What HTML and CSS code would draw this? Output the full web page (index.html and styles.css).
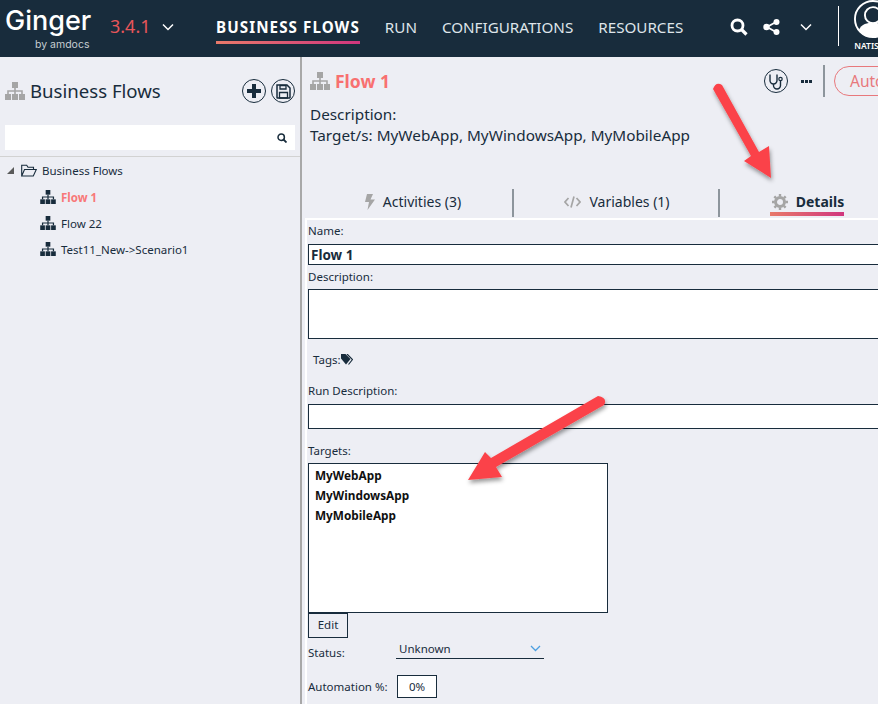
FILE: index.html
```html
<!DOCTYPE html>
<html lang="en">
<head>
    <meta charset="UTF-8">
    <title>Ginger - Business Flows</title>
    <link rel="stylesheet" href="styles.css">
</head>
<body>
    <svg class="defs" width="0" height="0">
        <symbol id="sitemap" viewBox="0 0 20 18">
            <rect x="7" y="0" width="6" height="6"/>
            <rect x="9.200" y="6" width="1.600" height="6"/>
            <path d="M2.200 12V8.200h15.600V12H16.200V9.800H3.800V12z"/>
            <rect x="0" y="12" width="6" height="6"/>
            <rect x="7" y="12" width="6" height="6"/>
            <rect x="14" y="12" width="6" height="6"/>
        </symbol>
    </svg>

    <header class="topbar">
        <div class="logo">
            <span class="logo-name">Ginger</span>
            <span class="logo-by">by amdocs</span>
        </div>
        <span class="version">3.4.1</span>
        <svg class="chevron" width="12" height="8" viewBox="0 0 12 8"><path d="M1 1.500l5 5 5-5" fill="none" stroke="#fff" stroke-width="1.500"/></svg>
        <nav class="nav">
            <a class="nav-item active">BUSINESS FLOWS</a>
            <a class="nav-item">RUN</a>
            <a class="nav-item">CONFIGURATIONS</a>
            <a class="nav-item">RESOURCES</a>
        </nav>
        <div class="top-tools">
            <svg width="18" height="18" viewBox="0 0 18 18"><circle cx="7.500" cy="7.500" r="5.500" fill="none" stroke="#fff" stroke-width="2.800"/><path d="M11.500 11.500l5 5" stroke="#fff" stroke-width="3.200"/></svg>
            <svg width="17" height="16" viewBox="0 0 17 16"><path d="M13 3L4 8l9 5" fill="none" stroke="#fff" stroke-width="1.800"/><circle cx="13.500" cy="3" r="3" fill="#fff"/><circle cx="3.500" cy="8" r="3.200" fill="#fff"/><circle cx="13.500" cy="13" r="3" fill="#fff"/></svg>
            <svg class="tool-chevron" width="12" height="8" viewBox="0 0 12 8"><path d="M1 1.500l5 5 5-5" fill="none" stroke="#fff" stroke-width="1.500"/></svg>
        </div>
        <div class="user">
            <svg class="avatar" width="38" height="38" viewBox="0 0 40 40"><circle cx="20" cy="20" r="19" fill="#182c3c" stroke="#fff" stroke-width="2"/><circle cx="20" cy="16" r="8.500" fill="none" stroke="#fff" stroke-width="2"/><path d="M5 32c3-7 9-8 15-8s12 1 15 8c-4 5-9 7-15 7S9 37 5 32z" fill="#fff"/></svg>
            <span class="user-name">NATISH</span>
        </div>
    </header>

    <main class="main">
        <aside class="side">
            <div class="side-head">
                <svg class="icon-grey side-icon"><use href="#sitemap"/></svg>
                <h2 class="side-title">Business Flows</h2>
                <button class="round-btn"><svg width="14" height="14" viewBox="0 0 14 14"><path d="M5 0h4v5h5v4H9v5H5V9H0V5h5z" fill="#182c3c"/></svg></button>
                <button class="round-btn"><svg width="15" height="15" viewBox="0 0 15 15"><path d="M1.500 1h9.500l3 3v9.500a.500.500 0 0 1-.500.500h-12a.500.500 0 0 1-.500-.500v-12.500z" fill="none" stroke="#182c3c" stroke-width="1.500"/><path d="M4 1.500h6v3.500H4zM3.500 8.500h8V14h-8z" fill="none" stroke="#182c3c" stroke-width="1.300"/></svg></button>
            </div>
            <div class="side-search">
                <svg width="10" height="10" viewBox="0 0 10 10"><circle cx="4.200" cy="4.200" r="3.200" fill="none" stroke="#182c3c" stroke-width="1.500"/><path d="M6.500 6.500l3 3" stroke="#182c3c" stroke-width="1.800"/></svg>
            </div>
            <ul class="tree">
                <li class="tree-root">
                    <span class="tree-arrow"></span>
                    <svg width="16" height="13" viewBox="0 0 16 13"><path d="M.700 12V1.200h5l1.300 2h5.500V5.500M.700 12h11.600l3-6.500H3.500z" fill="none" stroke="#182c3c" stroke-width="1.100"/></svg>
                    <span>Business Flows</span>
                </li>
                <li class="tree-item selected"><svg class="tree-icon"><use href="#sitemap"/></svg><span>Flow 1</span></li>
                <li class="tree-item"><svg class="tree-icon"><use href="#sitemap"/></svg><span>Flow 22</span></li>
                <li class="tree-item"><svg class="tree-icon"><use href="#sitemap"/></svg><span>Test11_New-&gt;Scenario1</span></li>
            </ul>
        </aside>

        <section class="content">
            <div class="flow-head">
                <svg class="icon-grey flow-icon"><use href="#sitemap"/></svg>
                <h1 class="flow-title">Flow 1</h1>
                <div class="flow-tools">
                    <span class="steth">
                        <svg width="16" height="17" viewBox="0 0 16 17"><path d="M2 1.500v6a3.500 3.500 0 0 0 7 0v-6M5.500 11v1.500a3.500 3.500 0 0 0 7 0V8" fill="none" stroke="#182c3c" stroke-width="1.400"/><circle cx="12.500" cy="6" r="1.700" fill="none" stroke="#182c3c" stroke-width="1.200"/></svg>
                    </span>
                    <span class="dots"><i></i><i></i><i></i></span>
                    <span class="tool-sep"></span>
                    <button class="auto-btn">Automate</button>
                </div>
            </div>
            <div class="flow-info">
                <p>Description:</p>
                <p>Target/s: MyWebApp, MyWindowsApp, MyMobileApp</p>
            </div>
            <div class="tabs">
                <div class="tab">
                    <svg width="11" height="16" viewBox="0 0 11 16"><path d="M3 0h6L6.500 5.500H11L3.500 16l1.500-8H1z" fill="#a5a5a5"/></svg>
                    <span>Activities (3)</span>
                </div>
                <div class="tab">
                    <svg width="17" height="12" viewBox="0 0 17 12"><path d="M4.500 2L1 6l3.500 4M12.500 2L16 6l-3.500 4M10 .500L7 11.500" fill="none" stroke="#a5a5a5" stroke-width="1.700"/></svg>
                    <span>Variables (1)</span>
                </div>
                <div class="tab tab-active">
                    <span class="tab-label">
                        <svg width="16" height="16" viewBox="0 0 16 16"><circle cx="8" cy="8" r="4.500" fill="none" stroke="#a5a5a5" stroke-width="3"/><path d="M8 0v16M0 8h16M2.300 2.300l11.400 11.400M13.700 2.300L2.300 13.700" stroke="#a5a5a5" stroke-width="2.400" stroke-dasharray="2.500 11"/></svg>
                        <b>Details</b>
                    </span>
                </div>
            </div>
            <form class="form">
                <label class="lbl lbl-name">Name:</label>
                <div class="field field-name">Flow 1</div>
                <label class="lbl lbl-desc">Description:</label>
                <div class="field field-desc"></div>
                <div class="tags">
                    <span>Tags:</span>
                    <svg width="12" height="11" viewBox="0 0 12 11"><path d="M0 0h4.500l5 5-4.500 5.500L0 4.500z" fill="#182c3c"/><path d="M6 0l5.500 5.500-4 5" fill="none" stroke="#182c3c" stroke-width="1.200"/></svg>
                </div>
                <label class="lbl lbl-run">Run Description:</label>
                <div class="field field-run"></div>
                <label class="lbl lbl-targets">Targets:</label>
                <ul class="targets">
                    <li>MyWebApp</li>
                    <li>MyWindowsApp</li>
                    <li>MyMobileApp</li>
                </ul>
                <button type="button" class="edit-btn">Edit</button>
                <div class="status-row">
                    <span class="status-lbl">Status:</span>
                    <div class="select">
                        <span>Unknown</span>
                        <svg width="11" height="7" viewBox="0 0 11 7"><path d="M1 1l4.500 4.500L10 1" fill="none" stroke="#4d9fe0" stroke-width="1.300"/></svg>
                    </div>
                </div>
                <div class="auto-row">
                    <span class="auto-lbl">Automation %:</span>
                    <div class="percent">0%</div>
                </div>
            </form>
        </section>
    </main>

    <!-- red callout arrows drawn over the screenshot -->
    <svg class="arrows" width="878" height="704" viewBox="0 0 878 704">
        <defs>
            <filter id="shade" x="-20%" y="-20%" width="140%" height="140%"><feDropShadow dx="1" dy="3" stdDeviation="2" flood-color="#000" flood-opacity=".4"/></filter>
        </defs>
        <g filter="url(#shade)" fill="#fb4349">
            <path d="M713 89Q716 81 722 85L759 152 769 146 771 178 744 161 751 156z"/>
            <path d="M598 396L491 458 485 452 468 480 502 477 496 467 604 405Q608 398 598 396z"/>
        </g>
    </svg>
</body>
</html>
```

FILE: styles.css
```css
* {
    box-sizing: border-box;
}
html, body {
    margin: 0;
    height: 704px;
    overflow: hidden;
}
body {
    position: relative;
    background-color: #edeef4;
    color: #182c3c;
    font-family: "Noto Sans", "Open Sans", sans-serif;
}
p, h1, h2, ul {
    margin: 0;
    padding: 0;
}
ul {
    list-style: none;
}
button {
    font-family: inherit;
    cursor: pointer;
}
.defs {
    position: absolute;
}
.arrows {
    position: absolute;
    left: 0;
    top: 0;
    pointer-events: none;
}

/* top bar */
.topbar {
    display: flex;
    align-items: flex-start;
    height: 57px;
    background-color: #182c3c;
    color: #fff;
    overflow: hidden;
}
.logo {
    display: flex;
    flex-direction: column;
    flex: none;
    width: 110px;
    padding: 6px 0 0 5px;
}
.logo-name {
    font-family: Inter, sans-serif;
    font-size: 27px;
    font-weight: 500;
    line-height: 30px;
}
.logo-by {
    margin: 2px 0 0 30px;
    font-family: Inter, sans-serif;
    font-size: 10.500px;
    line-height: 13px;
    color: #c7ced3;
    white-space: nowrap;
}
.version {
    flex: none;
    margin: 13px 0 0 0;
    width: 52px;
    font-size: 18px;
    line-height: 26px;
    color: #e8565a;
}
.chevron {
    flex: none;
    margin-top: 23px;
}
.nav {
    display: flex;
    flex: none;
    gap: 25px;
    margin: 17px 0 0 42px;
}
.nav-item {
    height: 27px;
    font-size: 15.200px;
    line-height: 20px;
    color: #dfe5ea;
    white-space: nowrap;
}
.nav-item.active {
    font-weight: 700;
    letter-spacing: 1.070px;
    color: #fff;
    border-bottom: 3px solid;
    border-image: linear-gradient(90deg, #e87a6a, #d0357e) 1;
}
.top-tools {
    display: flex;
    flex: none;
    align-items: center;
    gap: 15px;
    margin: 18px 0 0 47px;
}
.tool-chevron {
    margin-left: 5px;
}
.user {
    display: flex;
    flex-direction: column;
    flex: none;
    width: 60px;
    margin: 6px 0 0 26px;
    height: 40px;
    padding-left: 15px;
    border-left: 1px solid #fff;
}
.avatar {
    margin-top: -6px;
    flex: none;
}
.user-name {
    font-size: 8.500px;
    font-weight: 600;
    line-height: 10px;
    margin-top: 3px;
}

/* panels */
.main {
    display: flex;
    height: 647px;
}
.side {
    flex: none;
    width: 302px;
    border-right: 2px solid #a8a8a8;
}
.icon-grey {
    fill: #a5a5a5;
}
.side-head {
    display: flex;
    align-items: center;
    height: 68px;
    padding: 0 5px 0 5px;
}
.side-icon {
    width: 20px;
    height: 18px;
    flex: none;
}
.side-title {
    flex: 1;
    margin: 0 0 2px 5px;
    font-size: 18.600px;
    font-weight: 400;
    white-space: nowrap;
}
.round-btn {
    display: flex;
    align-items: center;
    justify-content: center;
    width: 24px;
    height: 24px;
    margin-left: 5px;
    padding: 0;
    background: none;
    border: 1px solid #182c3c;
    border-radius: 50%;
}
.side-search {
    display: flex;
    align-items: center;
    justify-content: flex-end;
    height: 25px;
    margin: 0 5px;
    padding-right: 8px;
    background-color: #fff;
}
.tree {
    margin-top: 6px;
    border-top: 1px solid #d2d2d2;
    padding-top: 2px;
    font-size: 11.500px;
}
.tree-root {
    display: flex;
    align-items: center;
    height: 22px;
    gap: 5px;
    padding-left: 7px;
}
.tree-arrow {
    width: 0;
    height: 0;
    margin-right: 2px;
    border-left: 7px solid transparent;
    border-bottom: 7px solid #5a5a5a;
}
.tree-item {
    display: flex;
    align-items: center;
    gap: 5px;
    height: 26px;
    padding-left: 40px;
}
.tree-root + .tree-item {
    margin-top: 3px;
}
.tree-icon {
    width: 16px;
    height: 14px;
    fill: #182c3c;
    flex: none;
}
.selected span {
    font-weight: 700;
    color: #f87878;
}

/* flow details */
.content {
    flex: 1;
    min-width: 0;
    overflow: hidden;
    font-size: 12px;
}
.flow-head {
    display: flex;
    align-items: center;
    height: 48px;
    padding: 0 0 0 8px;
}
.flow-icon {
    width: 20px;
    height: 18px;
    flex: none;
}
.flow-title {
    flex: 1;
    margin-left: 5px;
    font-size: 17.500px;
    font-weight: 700;
    color: #f87070;
}
.flow-tools {
    display: flex;
    align-items: center;
    flex: none;
    width: 114px;
}
.steth {
    display: flex;
    align-items: center;
    justify-content: center;
    flex: none;
    width: 24px;
    height: 24px;
    border: 1px solid #182c3c;
    border-radius: 50%;
}
.dots {
    display: flex;
    gap: 1px;
    margin-left: 13px;
}
.dots i {
    width: 3px;
    height: 3px;
    background-color: #182c3c;
}
.tool-sep {
    flex: none;
    width: 2px;
    height: 32px;
    margin-left: 11px;
    background-color: #8d959c;
}
.auto-btn {
    flex: none;
    width: 90px;
    height: 30px;
    margin-left: 9px;
    padding: 0 0 0 15px;
    text-align: left;
    font-size: 15.500px;
    color: #e8787c;
    background: none;
    border: 1px solid #e8787c;
    border-radius: 15px;
}
.flow-info {
    padding: 0 0 0 8px;
    margin-top: -1px;
    font-size: 15.300px;
    line-height: 21px;
    height: 85px;
}
.tabs {
    display: flex;
    height: 28px;
    margin-left: 3px;
}
.tab {
    display: flex;
    align-items: center;
    justify-content: center;
    gap: 8px;
    flex: none;
    width: 206px;
    border-right: 2px solid #8d959c;
    font-size: 14px;
    padding-bottom: 3px;
}
.tab:first-child {
    width: 209px;
    padding-left: 8px;
}
.tab:nth-child(2) {
    padding-left: 2px;
}
.tab-active {
    width: 200px;
    border-right: 0;
    padding-right: 26px;
}
.tab-label {
    display: flex;
    align-items: center;
    gap: 8px;
    padding: 0 0 1px 2px;
    border-bottom: 4px solid;
    border-image: linear-gradient(90deg, #e87a6a, #d0357e) 1;
    margin-top: 5px;
}
.form {
    display: flex;
    flex-direction: column;
    align-items: flex-start;
    margin: 1px 0 0 3px;
    padding: 0 0 0 1px;
    width: 800px;
    height: 490px;
    border-top: 2px solid #fff;
    border-left: 2px solid #fff;
}
.lbl {
    height: 17px;
    font-size: 11.500px;
    line-height: 17px;
}
.lbl-name {
    margin-top: 2px;
}
.lbl-desc {
    margin-top: 3px;
}
.lbl-run {
    margin-top: 14px;
}
.lbl-targets {
    margin-top: 13px;
}
.field {
    width: 100%;
    background-color: #fff;
    border: 1px solid #182c3c;
}
.field-name {
    height: 21px;
    margin-top: 5px;
    padding-left: 2px;
    font-size: 13.500px;
    font-weight: 700;
    line-height: 20px;
}
.field-desc {
    height: 50px;
    margin-top: 4px;
}
.field-run {
    height: 25px;
    margin-top: 5px;
}
.tags {
    display: flex;
    align-items: center;
    height: 17px;
    margin: 12px 0 0 5px;
    font-size: 11.500px;
}
.targets {
    width: 300px;
    height: 150px;
    margin-top: 4px;
    padding: 1px 0 0 6px;
    background-color: #fff;
    border: 1px solid #182c3c;
    font-size: 11.800px;
    font-weight: 700;
    line-height: 20px;
    color: #101010;
}
.edit-btn {
    width: 40px;
    height: 25px;
    padding: 0 0 2px;
    font-size: 11.500px;
    color: #182c3c;
    background: none;
    border: 1px solid #182c3c;
}
.status-row {
    display: flex;
    height: 26px;
    width: 100%;
}
.status-lbl {
    width: 88px;
    font-size: 11.500px;
    line-height: 30px;
}
.select {
    display: flex;
    align-items: center;
    justify-content: space-between;
    width: 148px;
    height: 21px;
    padding: 1px 3px 0;
    border-bottom: 1px solid #182c3c;
    font-size: 11.500px;
}
.auto-row {
    display: flex;
    align-items: center;
    height: 24px;
    margin-top: 10px;
}
.auto-lbl {
    width: 89px;
    font-size: 11.500px;
}
.percent {
    width: 40px;
    height: 23px;
    background-color: #fff;
    border: 1px solid #182c3c;
    text-align: center;
    font-size: 11.500px;
    line-height: 21px;
}
```
